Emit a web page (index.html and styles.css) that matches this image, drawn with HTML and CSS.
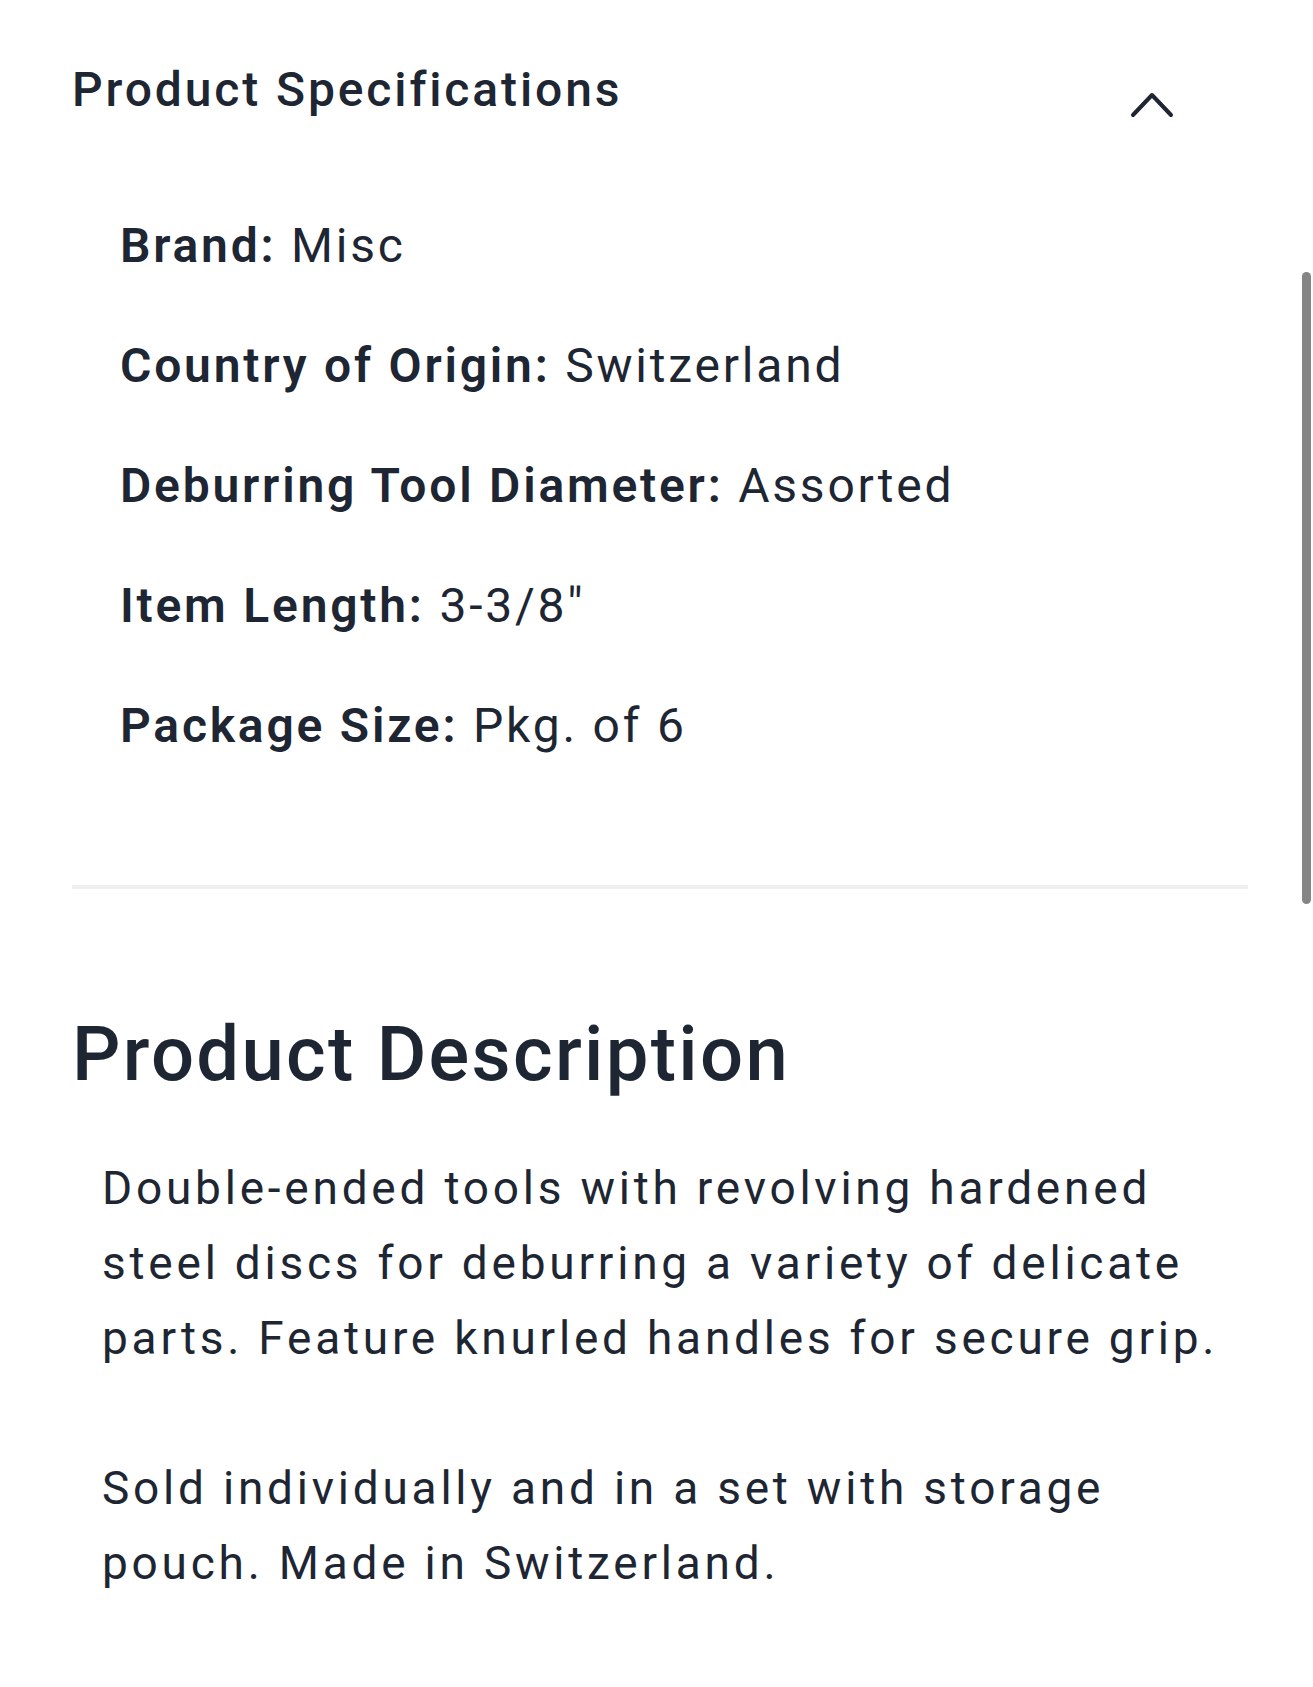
FILE: index.html
```html
<!DOCTYPE html>
<html lang="en">
<head>
<meta charset="utf-8">
<title>Product Specifications</title>
<link rel="stylesheet" href="styles.css">
</head>
<body>
<main class="page">
  <section class="specs">
    <header class="specs-header">
      <h2 class="specs-title">Product Specifications</h2>
      <button class="toggle" type="button" aria-label="Collapse specifications">
        <svg width="48" height="32" viewBox="0 0 48 32" aria-hidden="true"><polyline points="5,26 24,6 43,26" fill="none" stroke="#1d2632" stroke-width="4" stroke-linecap="round" stroke-linejoin="round"/></svg>
      </button>
    </header>
    <ul class="spec-list">
      <li><span class="label">Brand:</span> Misc</li>
      <li><span class="label">Country of Origin:</span> Switzerland</li>
      <li><span class="label">Deburring Tool Diameter:</span> Assorted</li>
      <li><span class="label">Item Length:</span> 3-3/8"</li>
      <li><span class="label">Package Size:</span> Pkg. of 6</li>
    </ul>
  </section>
  <hr class="divider">
  <section class="description">
    <h2 class="desc-title">Product Description</h2>
    <p class="desc-text">Double-ended tools with revolving hardened steel discs for deburring a variety of delicate parts. Feature knurled handles for secure grip.<br><br>Sold individually and in a set with storage pouch. Made in Switzerland.</p>
  </section>
</main>
<div class="scrollbar" aria-hidden="true"></div>
</body>
</html>
```

FILE: styles.css
```css
html, body {
  margin: 0;
  padding: 0;
  background: #ffffff;
}

body {
  font-family: Roboto, "Noto Sans", "Liberation Sans", sans-serif;
  color: #1d2632;
}

.page {
  padding: 0 65px 0 72px;
}

.specs-header {
  display: flex;
  justify-content: space-between;
  align-items: flex-start;
  padding-top: 62px;
}

.specs-title {
  margin: 0;
  font-size: 48px;
  line-height: 56px;
  font-weight: 500;
  letter-spacing: 0.06em;
}

.toggle {
  margin: 27px 72px 0 0;
  padding: 0;
  border: 0;
  background: none;
  display: block;
  line-height: 0;
}

.spec-list {
  list-style: none;
  margin: 65px 0 0 0;
  padding: 0 0 0 48px;
}

.spec-list li {
  font-size: 48px;
  line-height: 120px;
  font-weight: 400;
  letter-spacing: 0.058em;
}

.label {
  font-weight: 600;
}

.divider {
  margin: 99px 0 0 0;
  border: 0;
  height: 4px;
  background: #efefef;
}

.desc-title {
  margin: 120px 0 0 0;
  font-size: 76px;
  line-height: 91px;
  font-weight: 500;
  letter-spacing: 0.03em;
}

.desc-text {
  margin: 51px 0 0 0;
  padding-left: 30px;
  font-size: 46px;
  line-height: 75px;
  font-weight: 400;
  letter-spacing: 0.082em;
}

.scrollbar {
  position: absolute;
  left: 1302px;
  top: 272px;
  width: 9px;
  height: 632px;
  border-radius: 5px;
  background: #858585;
}
```
